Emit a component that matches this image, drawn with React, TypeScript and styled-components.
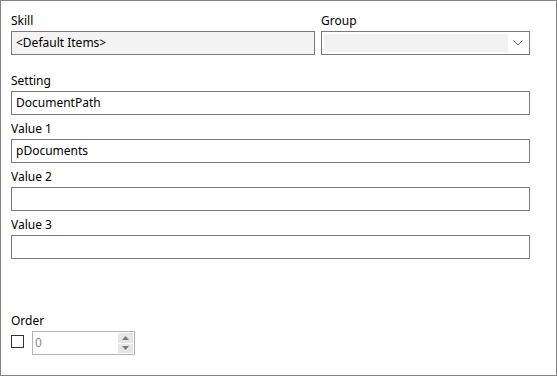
import styled, { createGlobalStyle } from 'styled-components';

const GlobalStyle = createGlobalStyle`
  html, body {
    margin: 0;
    padding: 0;
    background: #ffffff;
  }
  body {
    font-family: "Noto Sans", "Segoe UI", "Liberation Sans", sans-serif;
    font-size: 12px;
    color: #000000;
  }
`;

const Frame = styled.div`
  box-sizing: border-box;
  width: 557px;
  height: 376px;
  border: 1px solid #828282;
  padding: 6px 26px 0 10px;
  background: #ffffff;
`;

const TopRow = styled.div`
  display: grid;
  grid-template-columns: 304px 1fr;
  column-gap: 6px;
  margin-bottom: 12px;
`;

const Field = styled.div`
  display: flex;
  flex-direction: column;
`;

const Label = styled.div`
  box-sizing: border-box;
  height: 24px;
  padding-top: 6px;
  line-height: 16px;
  white-space: nowrap;
`;

const TextBox = styled.div<{ $disabled?: boolean }>`
  box-sizing: border-box;
  height: 24px;
  border: 1px solid #7a7a7a;
  background: ${({ $disabled }) => ($disabled ? '#f3f3f3' : '#ffffff')};
  padding: 0 4px;
  line-height: 22px;
  white-space: nowrap;
  overflow: hidden;
`;

const Combo = styled.div`
  box-sizing: border-box;
  height: 24px;
  border: 1px solid #7a7a7a;
  background: #ffffff;
  padding: 2px;
  display: flex;
  align-items: stretch;
`;

const ComboText = styled.div`
  flex: 1;
  background: #f2f2f2;
`;

const ComboArrow = styled.div`
  width: 19px;
  display: flex;
  align-items: center;
  justify-content: center;
`;

const OrderBlock = styled.div`
  margin-top: 48px;
`;

const OrderRow = styled.div`
  display: flex;
  align-items: flex-start;
  gap: 8px;
`;

const CheckBox = styled.div`
  box-sizing: border-box;
  width: 13px;
  height: 13px;
  margin-top: 4px;
  border: 1px solid #333333;
  background: #ffffff;
`;

const Spinner = styled.div`
  box-sizing: border-box;
  width: 103px;
  height: 24px;
  border: 1px solid #b4b4b4;
  background: #ffffff;
  display: flex;
  align-items: stretch;
  padding: 1px 1px 1px 0;
`;

const SpinValue = styled.div`
  flex: 1;
  padding-left: 2px;
  line-height: 20px;
  color: #8a8a8a;
`;

const SpinButtons = styled.div`
  width: 15px;
  display: flex;
  flex-direction: column;
  gap: 1px;
`;

const SpinButton = styled.div`
  flex: 1;
  background: #e6e6e6;
  display: flex;
  align-items: center;
  justify-content: center;
`;

const Chevron = () => (
  <svg width="10" height="6" viewBox="0 0 10 6">
    <path d="M0.5 0.5 L5 5 L9.5 0.5" fill="none" stroke="#606060" strokeWidth="1" />
  </svg>
);

const Arrow = ({ up }: { up?: boolean }) => (
  <svg width="7" height="4" viewBox="0 0 7 4">
    <path d={up ? 'M0 4 L3.5 0 L7 4 Z' : 'M0 0 L7 0 L3.5 4 Z'} fill="#7a7a7a" />
  </svg>
);

const fields = [
  { label: 'Setting', value: 'DocumentPath' },
  { label: 'Value 1', value: 'pDocuments' },
  { label: 'Value 2', value: '' },
  { label: 'Value 3', value: '' },
];

export default function App() {
  return (
    <>
      <GlobalStyle />
      <Frame>
        <TopRow>
          <Field>
            <Label>Skill</Label>
            <TextBox $disabled>&lt;Default Items&gt;</TextBox>
          </Field>
          <Field>
            <Label>Group</Label>
            <Combo>
              <ComboText />
              <ComboArrow>
                <Chevron />
              </ComboArrow>
            </Combo>
          </Field>
        </TopRow>
        {fields.map((f) => (
          <Field key={f.label}>
            <Label>{f.label}</Label>
            <TextBox>{f.value}</TextBox>
          </Field>
        ))}
        <OrderBlock>
          <Label>Order</Label>
          <OrderRow>
            <CheckBox />
            <Spinner>
              <SpinValue>0</SpinValue>
              <SpinButtons>
                <SpinButton>
                  <Arrow up />
                </SpinButton>
                <SpinButton>
                  <Arrow />
                </SpinButton>
              </SpinButtons>
            </Spinner>
          </OrderRow>
        </OrderBlock>
      </Frame>
    </>
  );
}
